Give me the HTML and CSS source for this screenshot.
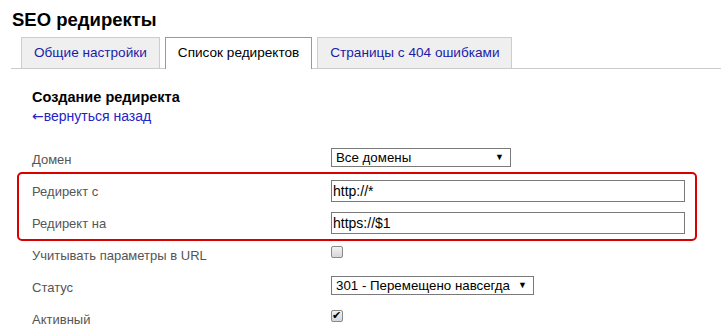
FILE: index.html
```html
<!DOCTYPE html>
<html lang="ru">
<head>
    <meta charset="UTF-8">
    <title>SEO редиректы</title>
    <link rel="stylesheet" href="styles.css">
</head>
<body>
    <h1>SEO редиректы</h1>

    <div class="tabs">
        <a class="tab" href="#">Общие настройки</a>
        <a class="tab active" href="#">Список редиректов</a>
        <a class="tab" href="#">Страницы с 404 ошибками</a>
    </div>

    <div class="content">
        <h2>Создание редиректа</h2>
        <a class="back" href="#"><span class="arrow">←</span>вернуться назад</a>

        <div class="form">
            <div class="row">
                <label>Домен</label>
                <div class="select-wrap" style="width: 180px;">
                    <select>
                        <option>Все домены</option>
                    </select>
                </div>
            </div>

            <div class="highlight">
                <div class="row">
                    <label>Редирект с</label>
                    <input type="text" value="http://*">
                </div>
                <div class="row">
                    <label>Редирект на</label>
                    <input type="text" value="https://$1">
                </div>
            </div>

            <div class="row">
                <label>Учитывать параметры в URL</label>
                <input type="checkbox" class="check">
            </div>

            <div class="row">
                <label>Статус</label>
                <div class="select-wrap" style="width: 203px;">
                    <select>
                        <option>301 - Перемещено навсегда</option>
                    </select>
                </div>
            </div>

            <div class="row">
                <label>Активный</label>
                <input type="checkbox" class="check" checked>
            </div>
        </div>
    </div>
</body>
</html>
```

FILE: styles.css
```css
body {
    font-family: "Liberation Sans", Arial, sans-serif;
    font-size: 13px;
    color: #000;
    margin: 0;
    padding: 0 0 0 11px;
    background: #fff;
}
h1 {
    font-size: 18.5px;
    line-height: 20px;
    margin: 0 0 7px 1px;
    padding-top: 10px;
}
.tabs {
    display: flex;
    gap: 5px;
    padding-left: 10px;
    border-bottom: 1px solid #cccccc;
    height: 31px;
}
.tab {
    display: block;
    height: 30px;
    line-height: 30px;
    padding: 0 12px;
    border: 1px solid #cccccc;
    border-bottom: none;
    background: #efefef;
    color: #1c1ca8;
    font-size: 13.6px;
    text-decoration: none;
}
.tab.active {
    background: #fff;
    color: #000;
    border-color: #999999;
    height: 31px;
    position: relative;
    z-index: 1;
}
.content {
    padding-left: 21px;
}
h2 {
    font-size: 14.5px;
    margin: 0;
    padding-top: 20px;
    line-height: 17px;
}
.back {
    display: block;
    color: #2323c8;
    font-size: 14px;
    text-decoration: none;
    line-height: 16px;
    margin-top: 2px;
}
.arrow {
    font-family: "DejaVu Sans", sans-serif;
    font-size: 14px;
}
.form {
    margin-top: 20px;
    width: 654px;
}
.row {
    display: flex;
    align-items: flex-start;
    height: 32px;
}
.row label {
    width: 299px;
    flex: none;
    line-height: 32px;
    color: #555555;
}
.highlight {
    position: relative;
}
.highlight::after {
    content: "";
    position: absolute;
    top: -4px;
    bottom: -1px;
    left: -15px;
    right: -11px;
    border: 2px solid #d90000;
    border-radius: 5px;
    pointer-events: none;
}
input[type="text"] {
    margin: 4px 0 0;
    width: 354px;
    height: 22px;
    box-sizing: border-box;
    border: 1px solid #7a7a7a;
    padding: 0 1px;
    font-family: "Liberation Sans", Arial, sans-serif;
    font-size: 14px;
    color: #000;
    outline: none;
}
.select-wrap {
    position: relative;
    margin-top: 4px;
}
.select-wrap::after {
    content: "▼";
    position: absolute;
    right: 7px;
    top: 3px;
    font-size: 9px;
    line-height: 12px;
    color: #000;
    pointer-events: none;
}
select {
    appearance: none;
    -webkit-appearance: none;
    display: block;
    width: 100%;
    height: 19px;
    border: 1px solid #7a7a7a;
    border-radius: 0;
    background: #fff;
    padding: 0 0 0 4px;
    font-family: "Liberation Sans", Arial, sans-serif;
    font-size: 13.3px;
    color: #000;
}
.check {
    appearance: none;
    -webkit-appearance: none;
    width: 12px;
    height: 12px;
    margin: 6px 0 0;
    border: 1px solid #8a8a8a;
    border-radius: 2px;
    background: linear-gradient(#f2f2f2, #d6d6d6);
    position: relative;
    box-sizing: border-box;
}
.check:checked::after {
    content: "✔";
    position: absolute;
    left: 0;
    top: -1px;
    font-family: "DejaVu Sans", sans-serif;
    font-size: 11px;
    line-height: 12px;
    color: #000;
}
```
